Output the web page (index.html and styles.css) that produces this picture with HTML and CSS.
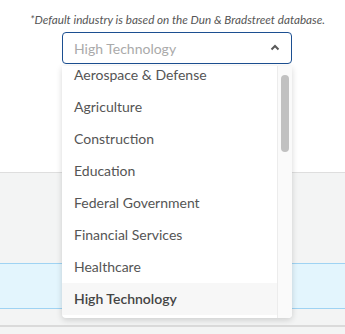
FILE: index.html
```html
<!DOCTYPE html>
<html lang="en">
<head>
    <meta charset="utf-8">
    <title>Industry</title>
    <link rel="stylesheet" href="styles.css">
</head>
<body>
    <div class="top">
        <div class="note">*Default industry is based on the Dun &amp; Bradstreet database.</div>
        <div class="picker">
            <div class="select">
                <span class="placeholder">High Technology</span>
                <svg class="caret" width="10" height="7" viewBox="0 0 10 7">
                    <polyline points="1.5,5.5 5,2 8.5,5.5" fill="none" stroke="#5a5a5a" stroke-width="2"/>
                </svg>
            </div>
            <div class="menu">
                <div class="options">
                    <div class="option">Aerospace &amp; Defense</div>
                    <div class="option">Agriculture</div>
                    <div class="option">Construction</div>
                    <div class="option">Education</div>
                    <div class="option">Federal Government</div>
                    <div class="option">Financial Services</div>
                    <div class="option">Healthcare</div>
                    <div class="option active">High Technology</div>
                </div>
                <div class="track"><div class="thumb"></div></div>
            </div>
        </div>
    </div>
    <div class="band"></div>
    <div class="row"></div>
    <div class="gap"></div>
    <div class="rest"></div>
</body>
</html>
```

FILE: styles.css
```css
body{
    margin: 0;
    font-family: Lato, "Open Sans", sans-serif;
    background-color: #f3f4f4;
}
.top{
    background-color: #fff;
    height: 172px;
    border-bottom: 1px solid #dedede;
    display: flex;
    flex-direction: column;
    align-items: center;
}
.note{
    margin-top: 12px;
    font-size: 11.7px;
    font-style: italic;
    color: #555;
    padding-left: 10px;
    line-height: 14px;
}
.picker{
    position: relative;
    margin-top: 6px;
    margin-left: 9px;
    width: 230px;
}
.select{
    height: 32px;
    box-sizing: border-box;
    border: 1px solid #1c4f91;
    border-radius: 4px;
    display: flex;
    align-items: center;
    justify-content: space-between;
    padding: 0 11px 0 11px;
}
.placeholder{
    font-size: 14px;
    color: #aaa;
}
.caret{
    margin-bottom: 1px;
}
.menu{
    position: absolute;
    top: 34px;
    left: 0;
    width: 230px;
    height: 252px;
    background-color: #fff;
    border-radius: 0 0 4px 4px;
    box-shadow: 0 2px 6px rgba(0,0,0,0.16);
    display: flex;
    overflow: hidden;
}
.options{
    flex: 1;
    overflow: hidden;
}
.option{
    height: 32px;
    line-height: 32px;
    padding-left: 12px;
    font-size: 14px;
    color: #555;
}
.option:first-child{
    margin-top: -7px;
}
.option.active{
    background-color: #f7f7f7;
    color: #444;
    font-weight: 600;
}
.track{
    width: 14px;
    background-color: #fafafa;
    border-left: 1px solid #ececec;
    display: flex;
    justify-content: center;
}
.thumb{
    margin-top: 9px;
    width: 8px;
    height: 77px;
    border-radius: 4px;
    background-color: #c1c1c1;
}
.band{
    height: 90px;
    border-bottom: 1px solid #9fd3f3;
}
.row{
    height: 44px;
    background-color: #e3f5fd;
    border-bottom: 1px solid #9fd3f3;
}
.gap{
    height: 16px;
    border-bottom: 2px solid #dadada;
}
.rest{
    height: 20px;
}
```
